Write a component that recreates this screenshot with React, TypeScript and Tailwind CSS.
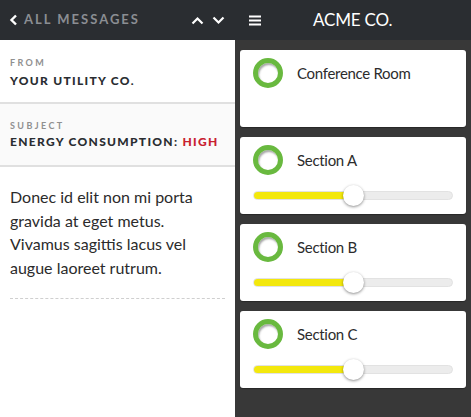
import React from 'react';

const sections = [
  { name: 'Conference Room', value: null as number | null },
  { name: 'Section A', value: 50 },
  { name: 'Section B', value: 50 },
  { name: 'Section C', value: 50 },
];

function Ring() {
  return (
    <div className="w-[30px] h-[30px] rounded-full border-[5px] border-[#69b93f] shadow-[inset_1px_2px_2px_rgba(0,0,0,0.35)] shrink-0" />
  );
}

function Slider({ value }: { value: number }) {
  return (
    <div className="relative mt-[10px] h-[20px] flex items-center">
      <div className="w-full h-[9px] rounded-full bg-[#ececec] border border-[#e2e2e2] overflow-hidden">
        <div className="h-full bg-[#f3e80d]" style={{ width: `${value}%` }} />
      </div>
      <div
        className="absolute top-0 w-[21px] h-[21px] -ml-[10px] rounded-full bg-white shadow-[0_1px_3px_rgba(0,0,0,0.45)]"
        style={{ left: `${value}%` }}
      />
    </div>
  );
}

function Card({ name, value }: { name: string; value: number | null }) {
  return (
    <div className="h-[77px] rounded-[3px] bg-white px-[13px] pt-[8px] shadow-[0_1px_1px_rgba(0,0,0,0.3)]">
      <div className="flex items-center gap-[14px]">
        <Ring />
        <span className="text-[15px] text-[#2c2c2c] tracking-[-0.3px]">{name}</span>
      </div>
      {value !== null && <Slider value={value} />}
    </div>
  );
}

export default function App() {
  return (
    <div className="w-[471px] h-[417px] flex flex-col bg-[#383838] font-['Lato',sans-serif] overflow-hidden">
      <div className="h-[40px] bg-[#2a2d31] flex items-center shrink-0">
        <div className="w-[235px] flex items-center pl-[9px] pr-[10px]">
          <svg width="9" height="12" viewBox="0 0 9 12" className="mr-[6px]">
            <path d="M7 1.5 L2.5 6 L7 10.5" stroke="#fff" strokeWidth="2.4" fill="none" />
          </svg>
          <span className="text-[13px] font-bold tracking-[2px] text-[#8b8e93]">ALL MESSAGES</span>
          <div className="ml-auto flex items-center gap-[8px]">
            <svg width="13" height="9" viewBox="0 0 13 9">
              <path d="M1.5 7.5 L6.5 2.5 L11.5 7.5" stroke="#fff" strokeWidth="2.2" fill="none" />
            </svg>
            <svg width="13" height="9" viewBox="0 0 13 9">
              <path d="M1.5 1.5 L6.5 6.5 L11.5 1.5" stroke="#fff" strokeWidth="2.2" fill="none" />
            </svg>
          </div>
        </div>
        <div className="flex-1 flex items-center pl-[14px] relative">
          <svg width="12" height="11" viewBox="0 0 12 11">
            <rect x="0" y="0.5" width="12" height="2" fill="#fff" />
            <rect x="0" y="4.5" width="12" height="2" fill="#fff" />
            <rect x="0" y="8.5" width="12" height="2" fill="#fff" />
          </svg>
          <span className="absolute left-[78px] text-[17px] text-white tracking-[-0.2px]">ACME CO.</span>
        </div>
      </div>
      <div className="flex flex-1">
        <div className="w-[235px] bg-white flex flex-col">
          <div className="px-[10px] pt-[16px] pb-[12px] border-b-2 border-[#e0e0e0]">
            <div className="text-[9px] font-bold tracking-[2.4px] text-[#909090]">FROM</div>
            <div className="mt-[2px] text-[12px] font-black tracking-[1.3px] text-[#2a2d31]">YOUR UTILITY CO.</div>
          </div>
          <div className="px-[10px] pt-[15px] pb-[14px] bg-[#fafafa] border-b-2 border-[#e0e0e0]">
            <div className="text-[9px] font-bold tracking-[2.4px] text-[#909090]">SUBJECT</div>
            <div className="mt-[1px] text-[12px] font-black tracking-[1.3px] text-[#2a2d31] whitespace-nowrap">
              ENERGY CONSUMPTION: <span className="text-[#c8202f]">HIGH</span>
            </div>
          </div>
          <div className="mx-[10px] pt-[18px] pb-[19px] text-[16px] leading-[23.5px] text-[#2b2b2b] border-b border-dashed border-[#cfcfcf]">
            Donec id elit non mi porta gravida at eget metus. Vivamus sagittis lacus vel augue laoreet rutrum.
          </div>
        </div>
        <div className="flex-1 px-[5px] pt-[10px] flex flex-col gap-[10px]">
          {sections.map((s) => (
            <Card key={s.name} name={s.name} value={s.value} />
          ))}
        </div>
      </div>
    </div>
  );
}
